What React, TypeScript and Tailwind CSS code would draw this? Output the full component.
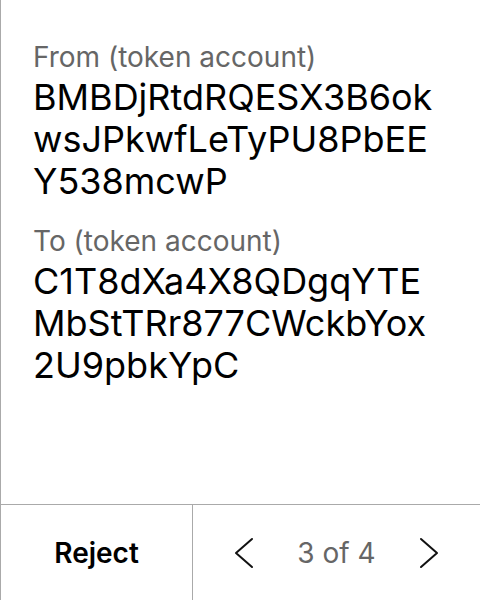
import { ReactNode } from 'react'

const fromAddress = ['BMBDjRtdRQESX3B6ok', 'wsJPkwfLeTyPU8PbEE', 'Y538mcwP']
const toAddress = ['C1T8dXa4X8QDgqYTE', 'MbStTRr877CWckbYox', '2U9pbkYpC']

function Chevron({ dir }: { dir: 'left' | 'right' }) {
  return (
    <svg width="20" height="32" viewBox="0 0 20 32" fill="none" stroke="#111" strokeWidth="2" strokeLinecap="round" strokeLinejoin="round">
      {dir === 'left' ? <polyline points="18,2 2,16 18,30" /> : <polyline points="2,2 18,16 2,30" />}
    </svg>
  )
}

function Field({ label, lines }: { label: string; lines: string[] }): ReactNode {
  return (
    <div>
      <p className="text-[28px] leading-[34px] text-[#666]">{label}</p>
      <p className="mt-[2px] text-[36px] leading-[42px] text-black">
        {lines.map(l => <span key={l} className="block">{l}</span>)}
      </p>
    </div>
  )
}

export default function App() {
  return (
    <div className="flex h-[600px] w-[480px] flex-col border-l border-[#aaa] bg-white font-['Inter',sans-serif]">
      <div className="flex flex-1 flex-col gap-[22px] pl-[32px] pt-[40px]">
        <Field label="From (token account)" lines={fromAddress} />
        <Field label="To (token account)" lines={toAddress} />
      </div>
      <div className="flex h-[96px] border-t border-[#aaa]">
        <button className="flex w-[192px] items-center justify-center border-r border-[#aaa] text-[28px] font-semibold text-black">
          Reject
        </button>
        <div className="flex flex-1 items-center justify-center gap-[43px]">
          <Chevron dir="left" />
          <span className="text-[28px] text-[#666]">3 of 4</span>
          <Chevron dir="right" />
        </div>
      </div>
    </div>
  )
}
